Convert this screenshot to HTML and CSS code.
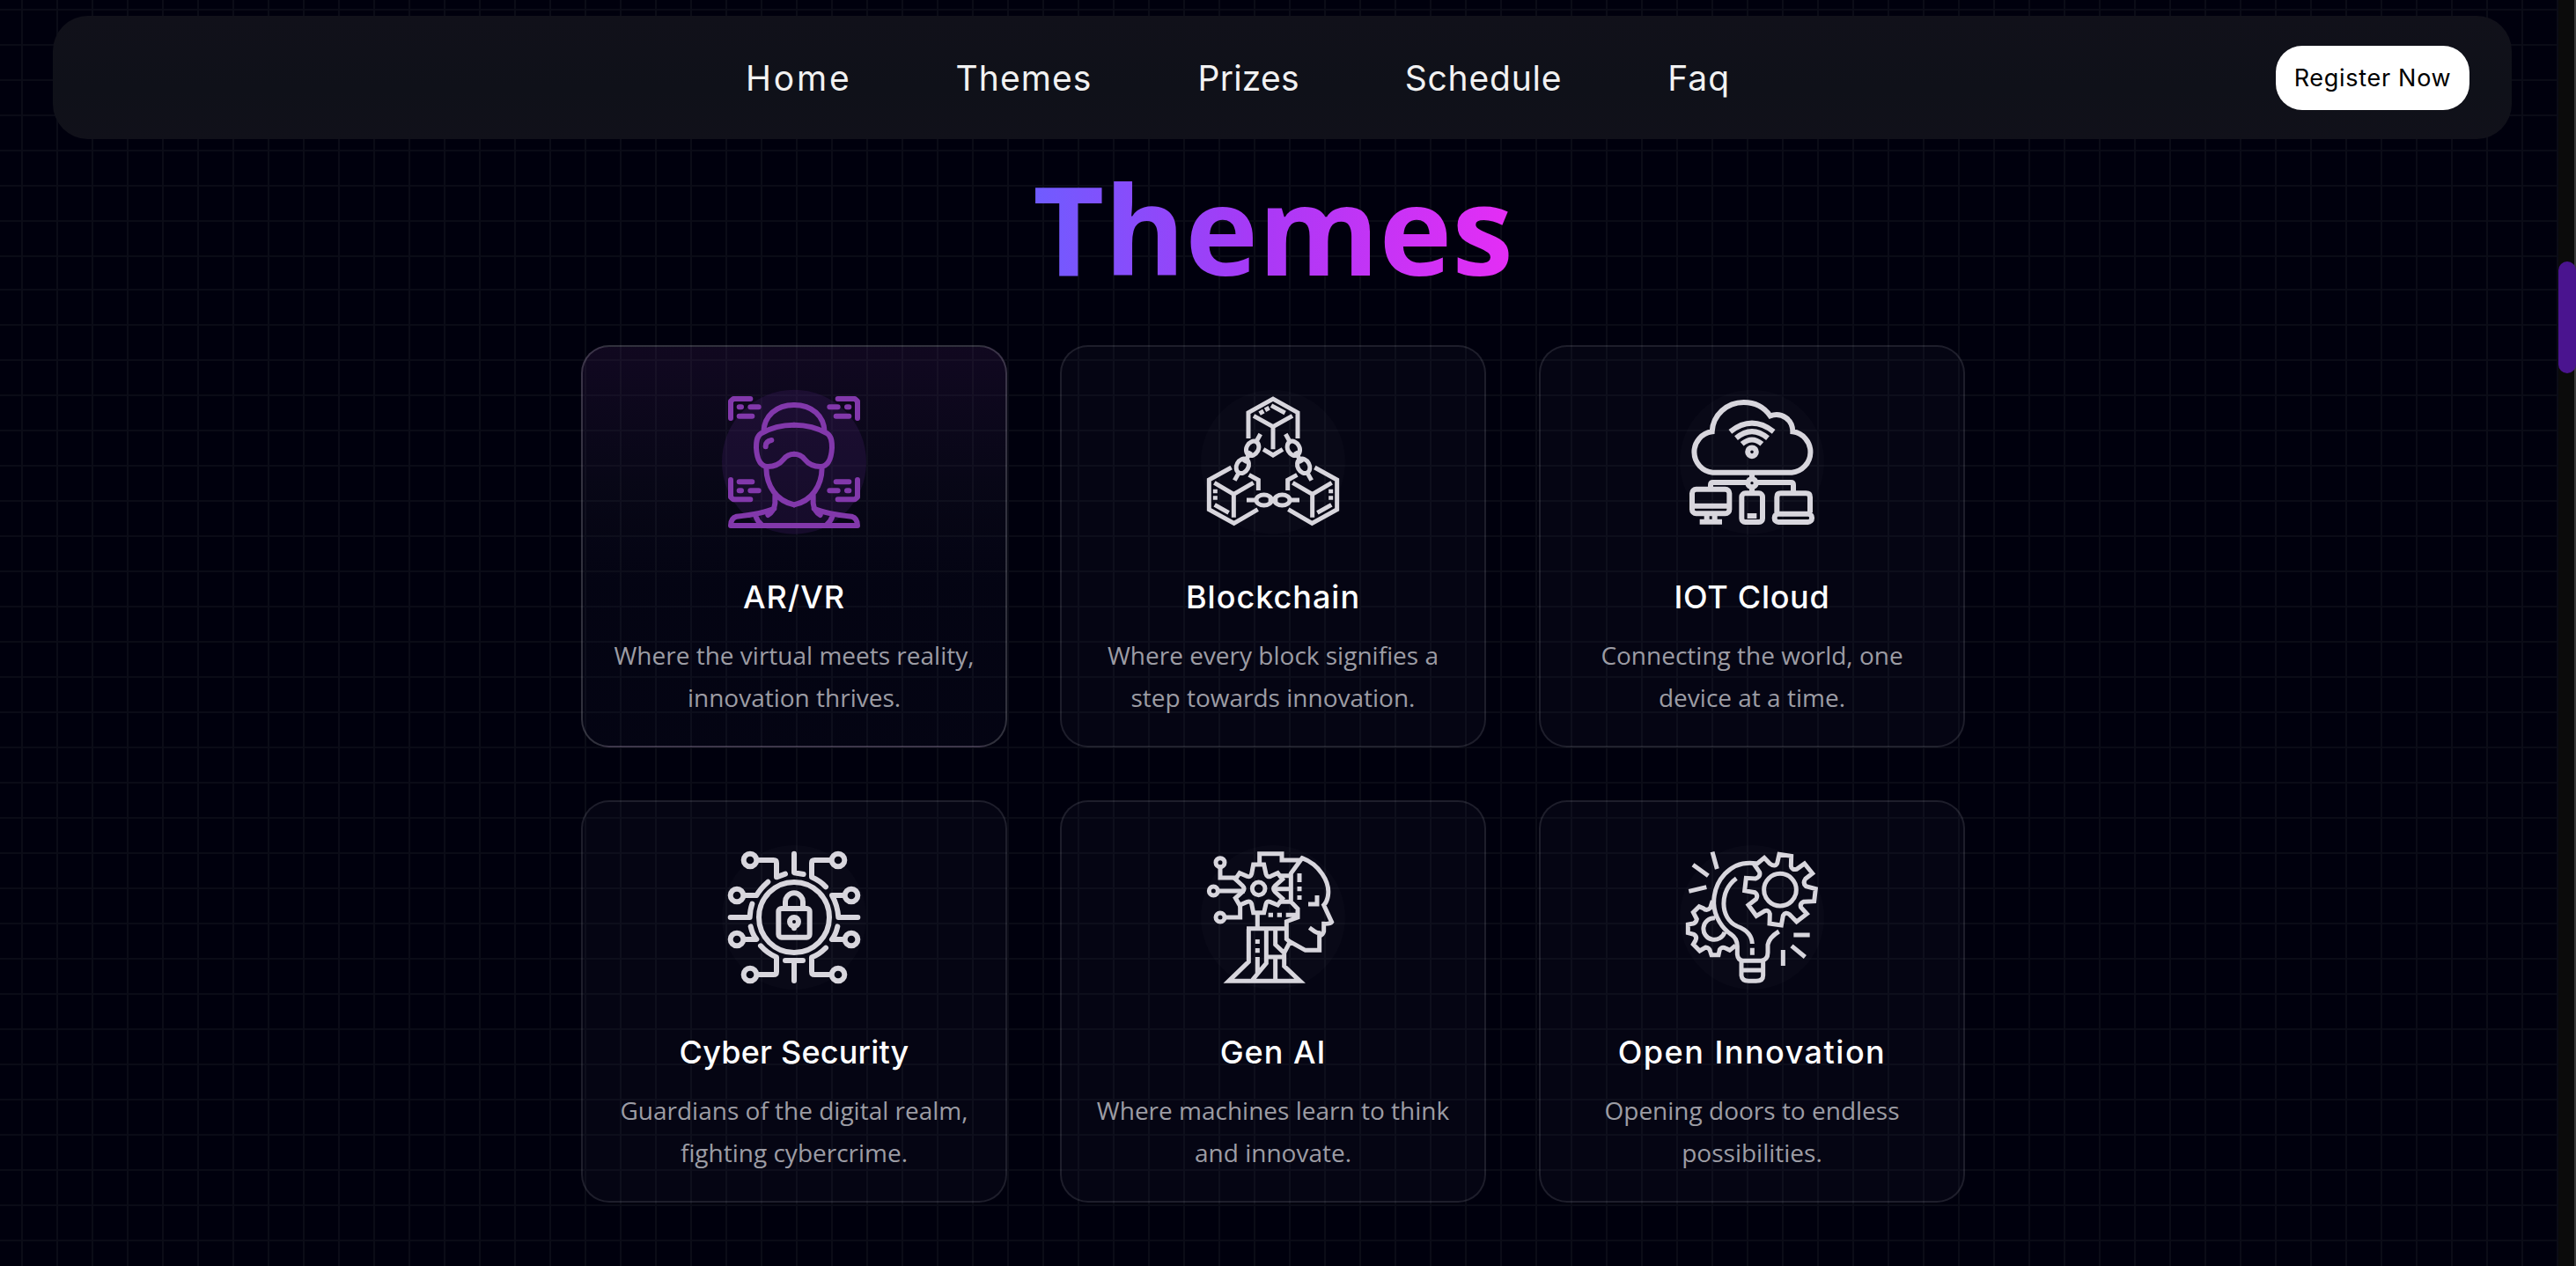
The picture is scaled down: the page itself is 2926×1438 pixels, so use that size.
FILE: index.html
```html
<!DOCTYPE html>
<html lang="en">
<head>
<meta charset="utf-8">
<title>Themes</title>
<link rel="stylesheet" href="styles.css">
</head>
<body>
<div class="backdrop"><div class="grid-top"></div><div class="grid-rest"></div></div>
<div class="page">
  <header class="nav">
    <nav class="links">
      <a class="home">Home</a><a class="themes">Themes</a><a class="prizes">Prizes</a><a class="schedule">Schedule</a><a class="faq">Faq</a>
    </nav>
    <button class="register">Register Now</button>
  </header>
  <h1 class="heading"><span>Themes</span></h1>
  <main class="cards">
    <article class="card active">
      <svg class="icon round" viewBox="0 0 552 552">
        <circle class="disc" cx="276" cy="284" r="246"/>
        <g id="vr-side">
          <path d="M60 135V77L69 69H127M89 97h7M127 97h28M89 128h44M60 345V404L69 412H127M89 352h44M89 382h7M127 382h28"/>
          <path d="M276 90C214 90 174 128 172 182M276 158Q213 158 163 187C149 197 147 212 147 236C149 272 160 299 186 300C215 300 229 289 241 274Q254 257 276 257M181 305C182 365 215 417 276 430M211 398V425Q208 452 187 465M208 443Q170 460 80 470Q60 476 60 501H276M145 468Q150 485 165 498"/>
        </g>
        <use href="#vr-side" transform="matrix(-1 0 0 1 552 0)"/>
        <path d="M179 232Q178 214 199 210"/>
      </svg>
      <h2 class="t-ar">AR/VR</h2>
      <p>Where the virtual meets reality,<br>innovation thrives.</p>
    </article>
    <article class="card">
      <svg class="icon thin" viewBox="0 0 552 552">
        <circle class="disc" cx="276" cy="284" r="246"/>
        <path d="M192 204V116L276 69L360 116V204M210 127L276 164L342 127M276 164V241M243 241L276 261L309 241M230 119l14-8M249 107l14-7M270 92L317 117"/>
        <g id="chain-side">
          <path d="M134 303L58 345V446L143 493L224 446M76 355L142 394L209 355M142 394V473M194 328L226 346V381M79 377v14M79 400v13M77 430L125 457"/>
          <g transform="translate(206 238) rotate(-61)"><ellipse rx="26" ry="20"/><path d="M26 0H56M-12 0H-47"/></g>
          <g transform="translate(172 298) rotate(-61)"><ellipse rx="26" ry="20"/><path d="M12 0H24M-26 0H-56"/></g>
          <path d="M186 414H224M260 414H276"/><ellipse cx="245" cy="414" rx="26" ry="18"/>
        </g>
        <use href="#chain-side" transform="matrix(-1 0 0 1 552 0)"/>
      </svg>
      <h2 class="t-block">Blockchain</h2>
      <p>Where every block signifies a<br>step towards innovation.</p>
    </article>
    <article class="card">
      <svg class="icon" viewBox="0 0 552 552">
        <circle class="disc" cx="276" cy="284" r="246"/>
        <path d="M142 320A70 70 0 0 1 140 181C143 124 190 81 248 81C285 81 318 98 338 127C378 113 415 140 415 181A70 70 0 0 1 412 320ZM202 181Q276 123 350 181M222 203Q276 158 330 203M242 223Q276 194 310 223M276 320V342M276 370V385M135 377V362Q135 354 143 354H262M290 354H409Q417 354 417 362V390"/>
        <circle cx="276" cy="250" r="14.500"/><circle cx="276" cy="356" r="14"/>
        <rect x="72" y="377" width="127" height="83" rx="14"/>
        <path d="M72 434H199M98 488H174M122 462V488M149 462V488M260 468h32M361 456V404Q361 391 374 391H460Q474 391 474 404V456"/>
        <rect x="241" y="391" width="71" height="98" rx="12"/><rect x="353" y="461" width="127" height="28" rx="13"/>
      </svg>
      <h2 class="t-iot">IOT Cloud</h2>
      <p>Connecting the world, one<br>device at a time.</p>
    </article>
    <article class="card">
      <svg class="icon round" viewBox="0 -3 552 552">
        <circle class="disc" cx="276" cy="282" r="246"/>
        <circle cx="276" cy="282" r="120"/>
        <circle cx="126" cy="87" r="22"/><circle cx="426" cy="87" r="22"/><circle cx="81" cy="207" r="22"/><circle cx="471" cy="207" r="22"/>
        <circle cx="81" cy="357" r="22"/><circle cx="471" cy="357" r="22"/><circle cx="126" cy="477" r="22"/><circle cx="426" cy="477" r="22"/>
        <rect x="223" y="252" width="106" height="98" rx="10"/>
        <path d="M246 250V229A30 30 0 0 1 306 229V250M276 312V319"/><circle cx="276" cy="297" r="15"/>
        <path d="M156 87H206Q216 87 216 97V145L246 134M276 65V130L308 135M396 87H346Q336 87 336 97V145Q365 158 384 178M110 207H148Q160 185 187 161M59 282H125Q126 255 133 236M128 313Q134 340 148 357H111M162 379Q185 405 216 418V467Q216 477 206 477H156M246 429H306M276 429V498M384 386Q360 410 336 418V467Q336 477 346 477H396M424 313Q418 340 405 357H441M441 207H405Q424 240 427 282H493"/>
      </svg>
      <h2 class="t-cyber">Cyber Security</h2>
      <p>Guardians of the digital realm,<br>fighting cybercrime.</p>
    </article>
    <article class="card">
      <svg class="icon thin" viewBox="0 -3 552 552">
        <circle class="disc" cx="276" cy="282" r="246"/>
        <circle cx="96" cy="95" r="15"/><circle cx="73" cy="192" r="15"/><circle cx="96" cy="282" r="15"/><circle cx="227" cy="184" r="22"/>
        <path d="M96 112V147H152M90 192H180M113 282H164V235"/>
        <path d="M209 102H245L252 134Q256 147 268 142L292 131L308 152L283 174Q273 184 283 195L308 218L292 240L266 229Q255 225 252 236L245 266H209L203 236Q199 225 188 229L162 240L148 216L172 195Q182 184 172 174L148 152L162 131L188 142Q200 146 203 134Z"/>
        <path d="M230 97V65H306V87H368M337 230V132L375 80C430 100 475 160 462 215Q458 232 449 240L476 298Q472 305 449 304V330Q446 342 434 345V394H386L334 365L314 403M300 140H337M284 185H332M300 229H337L360 253V282L322 296V356L334 366M366 132V162M366 177v16M366 207v15M260 274h16M290 274h16M320 274H358M396 237H426V207M400 317L418 330Q428 337 440 335M223 268V320M193 322V433L125 499H368L314 448V395M186 320H322M253 320V438L206 495M223 357v15M223 387v16M223 417V472M284 320V375L314 403M256 417H312M284 420V495"/>
      </svg>
      <h2 class="t-gen">Gen AI</h2>
      <p>Where machines learn to think<br>and innovate.</p>
    </article>
    <article class="card">
      <svg class="icon thin" viewBox="0 -3 552 552">
        <circle class="disc" cx="276" cy="282" r="246"/>
        <path d="M141 59L157 117M75 103L127 140M61 193L121 179M418 342H473M411 379L457 417M382 393V447"/>
        <path d="M290 98C200 85 145 160 146 235C148 280 175 320 205 340Q226 355 226 380V408Q228 428 245 430H308Q330 426 330 402V375Q335 350 368 330M223 149C165 190 165 285 225 312Q275 330 277 372M277 386v24M240 430V480Q242 499 265 499H290Q314 499 314 480V430M240 462H314"/>
        <circle cx="372" cy="188" r="55"/>
        <path d="M290 102L318 79L337 99Q355 112 362 98L369 67L410 73L409 107Q412 122 428 118L455 99L482 132L458 151Q448 165 460 176L493 185L488 227L452 229Q438 236 443 248L463 270L428 297L404 272Q390 262 382 276L376 309L336 303L337 270Q334 256 320 260L291 277L264 240L290 220Q298 206 286 197L251 191L256 148L288 150Q306 145 302 128L286 105ZM150 284A37 37 0 1 0 183 332M142 225L134 250Q122 262 110 251L96 245L76 265L88 288Q86 300 76 303L58 306V335L78 340Q90 348 84 360L76 374L98 396L118 384Q132 386 134 398L138 410H162L166 392Q174 380 188 388L200 394L220 378"/>
      </svg>
      <h2 class="t-open">Open Innovation</h2>
      <p>Opening doors to endless<br>possibilities.</p>
    </article>
  </main>
</div>
<div class="scroll-track"><div class="scroll-thumb"></div></div>
</body>
</html>
```
FILE: styles.css
```css
* { box-sizing: border-box; }
body { margin: 0; height: 1438px; overflow: hidden; background: #00000d; color: #fff; font-family: "Open Sans", "Noto Sans", sans-serif; }
.backdrop { position: absolute; inset: 0 20px 0 0; display: flex; flex-direction: column; z-index: -1; }
.grid-top, .grid-rest {
  background-image: linear-gradient(90deg, #0b0c17 2px, transparent 2px), linear-gradient(#0a0b16 2px, transparent 2px);
  background-size: 40px 40px;
}
.grid-top { height: 296px; background-position: 24px 10px; }
.grid-rest { flex: 1; background-position: 24px 32px; }
.page { width: 2906px; padding-top: 18px; }
.nav {
  display: flex; align-items: center; justify-content: space-between;
  width: 2793px; height: 140px; margin-left: 60px; padding: 0 48px 0 787px;
  border-radius: 40px; background: linear-gradient(#11111a, #0f1119 60%, #11111a);
}
.links { display: flex; gap: 120px; font-family: Inter, sans-serif; font-size: 39px; color: #f2f2f2; }
.home { letter-spacing: 2.8px; margin-right: -2px; }
.themes { letter-spacing: 1.1px; }
.prizes { letter-spacing: .2px; }
.schedule { letter-spacing: .8px; }
.faq { letter-spacing: 1px; }
.register {
  width: 220px; height: 73px; padding: 0; border: 0; border-radius: 30px; background: #fff; color: #000;
  font-family: Inter, sans-serif; font-size: 27px; letter-spacing: .7px; white-space: nowrap;
}
.heading { margin: 0; height: 234px; padding: 5px 14px 0 0; text-align: center; font-size: 140px; line-height: 192px; font-weight: 700; }
.heading span { background: linear-gradient(90deg, #6f5cff, #a63af6 45%, #e52df5); -webkit-background-clip: text; background-clip: text; color: transparent; }
.cards { display: grid; grid-template-columns: repeat(3, 484px); gap: 60px; margin-left: 660px; }
.card {
  display: flex; flex-direction: column; align-items: center; height: 457px; padding-top: 36px;
  border: 2px solid rgba(255, 255, 255, .1); border-radius: 32px; background: rgba(38, 42, 68, .12); text-align: center;
}
.card.active {
  border-color: rgba(255, 255, 255, .18);
  background: linear-gradient(rgba(70, 34, 95, .24), rgba(42, 38, 68, .18) 35%, rgba(30, 32, 60, .13) 60%);
}
.icon { width: 184px; height: 184px; fill: none; stroke: #d8d6dd; stroke-width: 18; }
.thin { stroke-width: 15; }
.round { stroke-linecap: round; stroke-linejoin: round; }
.disc { fill: rgba(255, 255, 255, .02); stroke: none; }
.active .icon { stroke: #8238ab; }
.active .disc { fill: rgba(70, 30, 110, .25); }
.card h2 { margin: 34px 0 0; font-family: Inter, sans-serif; font-weight: 500; font-size: 36px; line-height: 60px; white-space: nowrap; }
.t-ar, .t-block, .t-gen { letter-spacing: 1px; }
.t-iot { letter-spacing: .7px; }
.t-cyber { letter-spacing: .2px; }
.t-open { letter-spacing: 1.5px; }
.card p { margin: 12px 0 0; font-size: 28px; line-height: 48px; color: #9c9ca4; white-space: nowrap; }
.scroll-track { position: absolute; top: 0; right: 0; width: 20px; height: 1438px; padding-top: 297px; background: #0b0b0b; border-right: 2px solid #3a3a3a; }
.scroll-thumb { width: 20px; height: 127px; border-radius: 10px; background: #4a148f; }
```
